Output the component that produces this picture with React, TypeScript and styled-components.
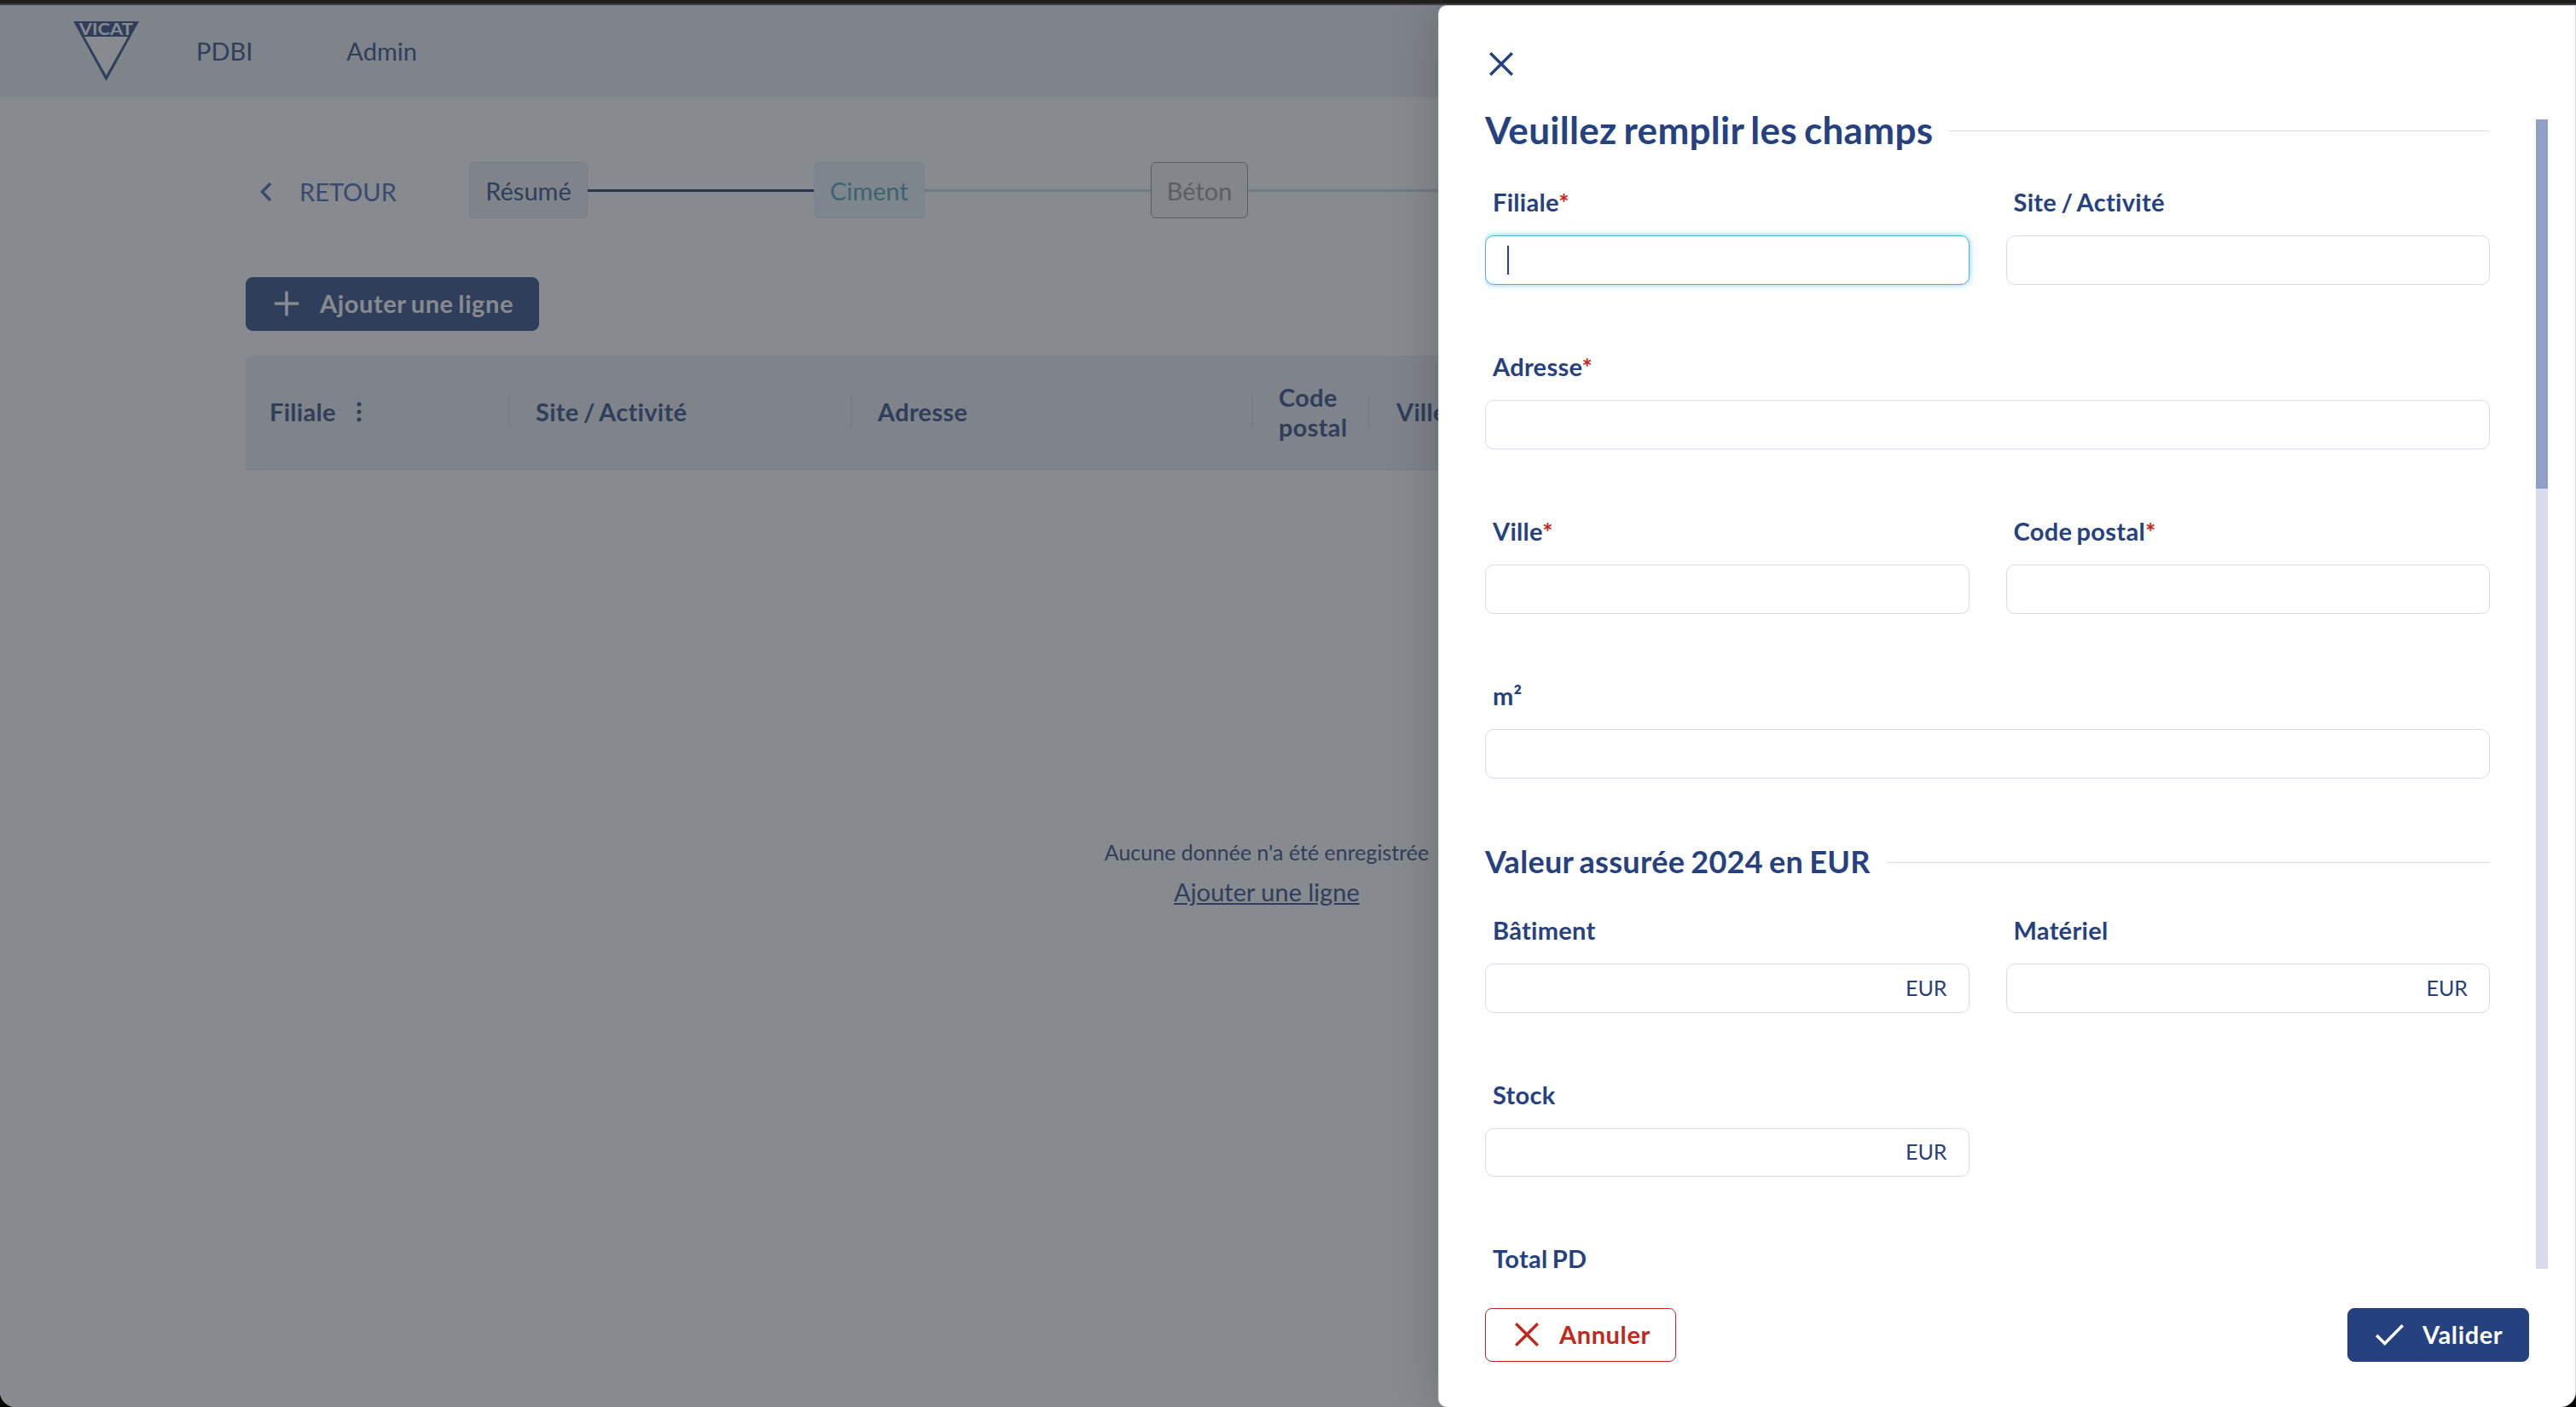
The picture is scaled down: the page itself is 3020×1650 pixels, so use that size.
import styled, { createGlobalStyle, css } from 'styled-components';

const NAVY = '#25417f';
const LINE = '#d8dbeb';
const RED = '#bf281b';

const GlobalStyle = createGlobalStyle`
  * {
    box-sizing: border-box;
  }

  body {
    margin: 0;
    background: #000;
    color: ${NAVY};
    font-family: Lato, 'Liberation Sans', sans-serif;
    font-size: 29px;
    font-variant-ligatures: none;
    line-height: 34px;
  }

  svg {
    display: block;
    flex-shrink: 0;
  }
`;

const boldText = css`
  font-weight: 700;
  letter-spacing: 0.3px;
  word-spacing: -2px;
`;

// --- Window ---
const Screen = styled.div`
  display: flex;
  flex-direction: column;
  width: 3020px;
  height: 1650px;
  overflow: hidden;
`;

const WindowEdge = styled.div`
  flex: 0 0 6px;
  background: #1f1f1f;
  border-bottom: 2px solid #3c3c3c;
`;

const Window = styled.div`
  position: relative;
  flex: 1;
  overflow: hidden;
  background: #fff;
  border-radius: 0 0 18px 18px;
`;

// --- Navigation ---
const Navbar = styled.nav`
  display: flex;
  align-items: center;
  height: 108px;
  padding: 0 86px;
  background: #ebeef4;
`;

const Logo = styled.svg`
  width: 77px;
  height: 70px;
  overflow: visible;
`;

const NavLink = styled.a<{ $gap: number }>`
  margin-left: ${({ $gap }) => $gap}px;
`;

// --- Page content ---
const Content = styled.main`
  width: 2682px;
  padding: 76px 0 0 288px;
`;

const StepBar = styled.div`
  display: flex;
  align-items: center;
  height: 66px;
`;

const BackLink = styled.a`
  display: flex;
  align-items: center;
  gap: 32px;
  width: 262px;
  padding: 3px 0 0 17px;
  color: #3a60b4;
`;

type StepState = 'done' | 'current' | 'disabled';

const Step = styled.div<{ $state: StepState; $width: number }>`
  display: flex;
  align-items: center;
  justify-content: center;
  flex: 0 0 ${({ $width }) => $width}px;
  height: 66px;
  padding-top: 2px;
  border: 1px solid;
  border-radius: 6px;

  ${({ $state }) =>
    $state === 'done' &&
    css`
      background: #ebeef4;
      border-color: ${LINE};
    `}
  ${({ $state }) =>
    $state === 'current' &&
    css`
      color: #4a9eb8;
      background: #e7f6fb;
      border-color: #d3edf5;
    `}
  ${({ $state }) =>
    $state === 'disabled' &&
    css`
      color: #919191;
      background: #f5f5f5;
      border-color: #8c8c8c;
    `}
`;

const StepLine = styled.div<{ $active?: boolean }>`
  flex: 0 0 265px;
  height: 3px;
  background: ${({ $active }) => ($active ? '#182b57' : '#cbd5ea')};
`;

const Button = styled.button<{ $outlined?: boolean; $width: number; $gap: number }>`
  display: flex;
  align-items: center;
  gap: ${({ $gap }) => $gap}px;
  width: ${({ $width }) => $width}px;
  height: 63px;
  padding: 0 0 1px ${({ $outlined }) => ($outlined ? 34 : 32)}px;
  border: 1px solid ${({ $outlined }) => ($outlined ? RED : NAVY)};
  border-radius: 8px;
  background: ${({ $outlined }) => ($outlined ? '#fff' : NAVY)};
  color: ${({ $outlined }) => ($outlined ? RED : '#fff')};
  font: inherit;
  font-weight: 700;
  letter-spacing: 0.6px;
  word-spacing: -2px;
  line-height: 32px;
  white-space: nowrap;
`;

const Toolbar = styled.div`
  display: flex;
  padding: 69px 0 29px;
`;

const TableHead = styled.div`
  display: grid;
  grid-template-columns: 310px 401px 470px 137px 1fr;
  align-items: center;
  height: 134px;
  background: #ebeef4;
  border-bottom: 1px solid #cbd5ea;
  border-radius: 8px 0 0 0;
`;

const HeadCell = styled.div`
  display: flex;
  align-items: center;
  justify-content: space-between;
  padding: 0 0 2px 30px;
  line-height: 35px;
  ${boldText}

  &:first-child {
    padding-left: 28px;
  }

  &:last-child {
    padding-left: 31px;
  }
`;

const HeadLabel = styled.span`
  display: flex;
  align-items: center;
  gap: 24px;
`;

const ColumnDivider = styled.i`
  width: 2px;
  height: 39px;
  background: ${LINE};
`;

const EmptyState = styled.div`
  display: flex;
  flex-direction: column;
  align-items: center;
  gap: 13px;
  padding-top: 431px;
  font-size: 25px;
`;

const EmptyLink = styled.a`
  font-size: 29px;
  text-decoration: underline;
`;

// --- Drawer ---
const Backdrop = styled.div`
  position: absolute;
  inset: 0;
  background: rgba(55, 60, 67, 0.6);
`;

const Drawer = styled.aside`
  position: absolute;
  top: 0;
  right: 0;
  bottom: 0;
  width: 1334px;
  display: flex;
  flex-direction: column;
  padding: 0 32px 0 54px;
  background: #fefefe;
  border: 1px solid ${LINE};
  border-bottom: none;
  border-radius: 10px 0 18px 10px;
  box-shadow: 0 0 60px rgba(0, 0, 0, 0.2);
`;

const CloseButton = styled.button`
  display: flex;
  align-self: flex-start;
  height: 118px;
  padding: 54px 0 0 5px;
  border: none;
  background: none;
  color: ${NAVY};
`;

const DrawerBody = styled.div`
  display: flex;
  justify-content: space-between;
  height: 1363px;
`;

const Form = styled.form`
  width: 1178px;
  overflow: hidden;
`;

const SectionTitle = styled.h2<{ $small?: boolean }>`
  display: flex;
  align-items: center;
  gap: 19px;
  margin: 0;
  font-size: ${({ $small }) => ($small ? 36 : 44)}px;
  line-height: ${({ $small }) => ($small ? 44 : 54)}px;
  padding: ${({ $small }) => ($small ? '75.5px 0 42px' : '0 0 41px')};
  ${boldText}
  word-spacing: ${({ $small }) => ($small ? -2 : -3)}px;

  &::after {
    content: '';
    flex: 1;
    height: 1px;
    margin-top: 2px;
    background: ${LINE};
  }
`;

const Fields = styled.div<{ $rowGap: number }>`
  display: grid;
  grid-template-columns: 1fr 1fr;
  gap: ${({ $rowGap }) => $rowGap}px 43px;
`;

const FieldWrapper = styled.div<{ $wide?: boolean }>`
  grid-column: ${({ $wide }) => ($wide ? '1 / -1' : 'auto')};
`;

const Label = styled.label`
  display: block;
  margin-bottom: 22px;
  padding-left: 9px;
  ${boldText}
`;

const Required = styled.span`
  color: ${RED};
`;

const InputBox = styled.div<{ $focused?: boolean }>`
  display: flex;
  align-items: center;
  justify-content: flex-end;
  height: 57.5px;
  padding: 0 25px;
  border: 1px solid ${({ $focused }) => ($focused ? '#4fb5d9' : LINE)};
  border-radius: 10px;
  background: #fff;
  box-shadow: ${({ $focused }) =>
    $focused ? '0 0 6px rgba(79, 181, 217, 0.75)' : 'none'};
  font-size: 25px;
`;

const Unit = styled.span`
  padding-bottom: 2px;
`;

const Caret = styled.i`
  width: 2px;
  height: 34px;
  margin-right: auto;
  background: ${NAVY};
`;

const ScrollTrack = styled.div`
  width: 14px;
  margin-top: 15px;
  background: ${LINE};
`;

const ScrollThumb = styled.div`
  height: 433px;
  background: #919fc4;
`;

const DrawerFooter = styled.footer`
  display: flex;
  justify-content: space-between;
  padding: 46px 22px 0 0;
`;

// --- Icons ---
const CrossIcon = () => (
  <svg width="28" height="28" viewBox="0 0 28 28" fill="none" stroke="currentColor" strokeWidth="3.4">
    <path d="M1.2 1.2 26.8 26.8M26.8 1.2 1.2 26.8" />
  </svg>
);

const PlusIcon = () => (
  <svg width="30" height="30" viewBox="0 0 30 30" fill="none" stroke="currentColor" strokeWidth="3.6">
    <path d="M15 .8v28.4M.8 15h28.4" />
  </svg>
);

const CheckIcon = () => (
  <svg width="33" height="27" viewBox="0 0 33 27" fill="none" stroke="currentColor" strokeWidth="3.4">
    <path d="M1.2 14 10.8 23.5 31.8 2.2" />
  </svg>
);

const ChevronIcon = () => (
  <svg width="14" height="22" viewBox="0 0 14 22" fill="none" stroke="currentColor" strokeWidth="3.4">
    <path d="M12 1 2.4 11 12 21" />
  </svg>
);

const DotsIcon = () => (
  <svg width="6" height="24" viewBox="0 0 6 24" fill="currentColor">
    <circle cx="3" cy="3" r="2.5" />
    <circle cx="3" cy="12" r="2.5" />
    <circle cx="3" cy="21" r="2.5" />
  </svg>
);

const VicatLogo = () => (
  <Logo viewBox="0 0 77 70">
    <path d="M0 0h77L38.5 70z" fill={NAVY} />
    <path d="M13 18h51L38.5 63.5z" fill="#fff" />
    <text
      x="38.3"
      y="16"
      textAnchor="middle"
      textLength="63"
      lengthAdjust="spacingAndGlyphs"
      fill="#fff"
      fontSize="18.5"
      fontWeight="700"
    >
      VICAT
    </text>
  </Logo>
);

type TField = {
  label: string;
  required?: boolean;
  wide?: boolean;
  unit?: string;
  focused?: boolean;
};

const generalFields: TField[] = [
  { label: 'Filiale', required: true, focused: true },
  { label: 'Site / Activité' },
  { label: 'Adresse', required: true, wide: true },
  { label: 'Ville', required: true },
  { label: 'Code postal', required: true },
  { label: 'm²', wide: true },
];

const valueFields: TField[] = [
  { label: 'Bâtiment', unit: 'EUR' },
  { label: 'Matériel', unit: 'EUR' },
  { label: 'Stock', unit: 'EUR' },
  { label: 'Total PD', wide: true },
];

function Field({ label, required, wide, unit, focused }: TField) {
  return (
    <FieldWrapper $wide={wide}>
      <Label>
        {label}
        {required && <Required>*</Required>}
      </Label>
      <InputBox $focused={focused}>
        {focused && <Caret />}
        {unit && <Unit>{unit}</Unit>}
      </InputBox>
    </FieldWrapper>
  );
}

export default function App() {
  return (
    <Screen>
      <GlobalStyle />
      <WindowEdge />
      <Window>
        <Navbar>
          <VicatLogo />
          <NavLink $gap={67}>PDBI</NavLink>
          <NavLink $gap={110}>Admin</NavLink>
        </Navbar>

        <Content>
          <StepBar>
            <BackLink>
              <ChevronIcon />
              RETOUR
            </BackLink>
            <Step $state="done" $width={139}>Résumé</Step>
            <StepLine $active />
            <Step $state="current" $width={130}>Ciment</Step>
            <StepLine />
            <Step $state="disabled" $width={114}>Béton</Step>
            <StepLine />
          </StepBar>

          <Toolbar>
            <Button $width={344} $gap={24}>
              <PlusIcon />
              Ajouter une ligne
            </Button>
          </Toolbar>

          <TableHead>
            <HeadCell>
              <HeadLabel>
                Filiale
                <DotsIcon />
              </HeadLabel>
              <ColumnDivider />
            </HeadCell>
            <HeadCell>
              Site / Activité
              <ColumnDivider />
            </HeadCell>
            <HeadCell>
              Adresse
              <ColumnDivider />
            </HeadCell>
            <HeadCell>
              Code
              <br />
              postal
              <ColumnDivider />
            </HeadCell>
            <HeadCell>Ville</HeadCell>
          </TableHead>

          <EmptyState>
            <span>Aucune donnée n'a été enregistrée</span>
            <EmptyLink>Ajouter une ligne</EmptyLink>
          </EmptyState>
        </Content>

        <Backdrop />

        <Drawer>
          <CloseButton aria-label="Fermer">
            <CrossIcon />
          </CloseButton>
          <DrawerBody>
            <Form>
              <SectionTitle>Veuillez remplir les champs</SectionTitle>
              <Fields $rowGap={79.5}>
                {generalFields.map((field) => (
                  <Field key={field.label} {...field} />
                ))}
              </Fields>
              <SectionTitle $small>Valeur assurée 2024 en EUR</SectionTitle>
              <Fields $rowGap={79}>
                {valueFields.map((field) => (
                  <Field key={field.label} {...field} />
                ))}
              </Fields>
            </Form>
            <ScrollTrack>
              <ScrollThumb />
            </ScrollTrack>
          </DrawerBody>
          <DrawerFooter>
            <Button $outlined $width={224} $gap={24}>
              <CrossIcon />
              Annuler
            </Button>
            <Button $width={213} $gap={22}>
              <CheckIcon />
              Valider
            </Button>
          </DrawerFooter>
        </Drawer>
      </Window>
    </Screen>
  );
}
